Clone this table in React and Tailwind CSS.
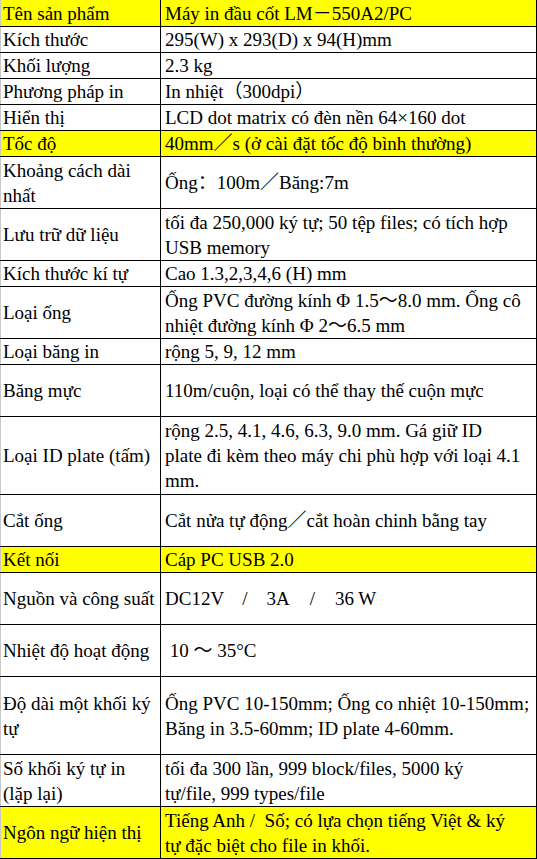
import React from "react";

const rows = [
  { l: ["Tên sản phẩm"], v: ["Máy in đầu cốt LM－550A2/PC"], h: "h-[27px]", y: true },
  { l: ["Kích thước"], v: ["295(W) x 293(D) x 94(H)mm"], h: "h-[26px]" },
  { l: ["Khối lượng"], v: ["2.3 kg"], h: "h-[26px]" },
  { l: ["Phương pháp in"], v: ["In nhiệt（300dpi）"], h: "h-[26px]" },
  { l: ["Hiển thị"], v: ["LCD dot matrix có đèn nền 64×160 dot"], h: "h-[26px]" },
  { l: ["Tốc độ"], v: ["40mm／s (ở cài đặt tốc độ bình thường)"], h: "h-[26px]", y: true },
  { l: ["Khoảng cách dài", "nhất"], v: ["Ống：100m／Băng:7m"], h: "h-[52px]" },
  { l: ["Lưu trữ dữ liệu"], v: ["tối đa 250,000 ký tự; 50 tệp files; có tích hợp", "USB memory"], h: "h-[52px]" },
  { l: ["Kích thước kí tự"], v: ["Cao 1.3,2,3,4,6 (H) mm"], h: "h-[26px]" },
  { l: ["Loại ống"], v: ["Ống PVC đường kính Φ 1.5～8.0 mm. Ống cô", "nhiệt đường kính Φ 2～6.5 mm"], h: "h-[52px]" },
  { l: ["Loại băng in"], v: ["rộng 5, 9, 12 mm"], h: "h-[26px]" },
  { l: ["Băng mực"], v: ["110m/cuộn, loại có thể thay thế cuộn mực"], h: "h-[52px]" },
  { l: ["Loại ID plate (tấm)"], v: ["rộng 2.5, 4.1, 4.6, 6.3, 9.0 mm. Gá giữ ID", "plate đi kèm theo máy chi phù hợp với loại 4.1", "mm."], h: "h-[78px]" },
  { l: ["Cắt ống"], v: ["Cắt nửa tự động／cắt hoàn chinh bằng tay"], h: "h-[52px]" },
  { l: ["Kết nối"], v: ["Cáp PC USB 2.0"], h: "h-[26px]", y: true },
  { l: ["Nguồn và công suất"], v: null, h: "h-[52px]", power: true },
  { l: ["Nhiệt độ hoạt động"], v: [" 10 ～ 35°C"], h: "h-[52px]" },
  { l: ["Độ dài một khối ký", "tự"], v: ["Ống PVC 10-150mm; Ống co nhiệt 10-150mm;", "Băng in 3.5-60mm; ID plate 4-60mm."], h: "h-[78px]" },
  { l: ["Số khối ký tự in", "(lặp lại)"], v: ["tối đa 300 lần, 999 block/files, 5000 ký", "tự/file, 999 types/file"], h: "h-[52px]" },
  { l: ["Ngôn ngữ hiện thị"], v: ["Tiếng Anh /  Số; có lựa chọn tiếng Việt & ký", "tự đặc biệt cho file in khối."], h: "h-[52px]", y: true },
];

function Lines({ lines }) {
  return (
    <div className="flex flex-col">
      {lines.map((t, i) => (
        <span key={i} className="whitespace-pre">{t}</span>
      ))}
    </div>
  );
}

export default function App() {
  return (
    <div
      className="w-[537px] h-[859px] bg-white text-black text-[19px] leading-[25px]"
      style={{ fontFamily: '"Liberation Serif", "DejaVu Serif", "Noto Sans CJK SC", serif' }}
    >
      {rows.map((r, i) => (
        <div
          key={i}
          className={`flex border-b border-black ${r.h} ${r.y ? "bg-[#ffff00]" : "bg-white"}`}
        >
          <div className="w-[161px] shrink-0 flex items-center border-l border-l-[#c8c8c8] border-r border-black pl-[2px]">
            <Lines lines={r.l} />
          </div>
          <div className="flex-1 flex items-center border-r border-black pl-[4px]">
            {r.power ? (
              <div className="flex whitespace-pre">
                <span>DC12V</span>
                <span className="ml-[18px]">/</span>
                <span className="ml-[19px]">3A</span>
                <span className="ml-[20px]">/</span>
                <span className="ml-[20px]">36 W</span>
              </div>
            ) : (
              <Lines lines={r.v} />
            )}
          </div>
        </div>
      ))}
    </div>
  );
}
